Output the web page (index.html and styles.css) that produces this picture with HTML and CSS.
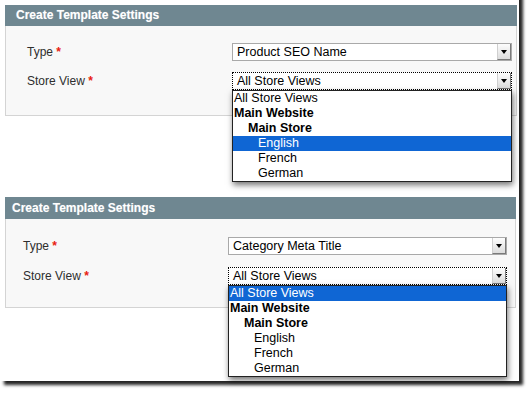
FILE: index.html
```html
<!DOCTYPE html>
<html lang="en">
<head>
  <meta charset="UTF-8">
  <title>Create Template Settings</title>
  <link rel="stylesheet" href="styles.css">
</head>
<body>
  <div class="shot">
    <section class="panel panel-a">
      <div class="panel-head">Create Template Settings</div>
      <div class="panel-body">
        <div class="row">
          <label>Type <em>*</em></label>
          <div class="select">Product SEO Name<span class="arrow"></span></div>
        </div>
        <div class="row">
          <label>Store View <em>*</em></label>
          <div class="select focus">All Store Views<span class="arrow"></span>
            <ul class="menu">
              <li>All Store Views</li>
              <li class="group">Main Website</li>
              <li class="group sub">Main Store</li>
              <li class="view selected">English</li>
              <li class="view">French</li>
              <li class="view">German</li>
            </ul>
          </div>
        </div>
      </div>
    </section>

    <section class="panel panel-b">
      <div class="panel-head">Create Template Settings</div>
      <div class="panel-body">
        <div class="row">
          <label>Type <em>*</em></label>
          <div class="select">Category Meta Title<span class="arrow"></span></div>
        </div>
        <div class="row">
          <label>Store View <em>*</em></label>
          <div class="select focus">All Store Views<span class="arrow"></span>
            <ul class="menu">
              <li class="selected">All Store Views</li>
              <li class="group">Main Website</li>
              <li class="group sub">Main Store</li>
              <li class="view">English</li>
              <li class="view">French</li>
              <li class="view">German</li>
            </ul>
          </div>
        </div>
      </div>
    </section>
  </div>
</body>
</html>
```

FILE: styles.css
```css
html {
  background: #fff;
}
body {
  margin: 0;
  min-height: 393px;
  font-family: "Liberation Sans", Arial, sans-serif;
  font-size: 12px;
}
.shot {
  width: 519px;
  height: 381px;
  margin-top: -8px;
  padding-top: 8px;
  background: #fff;
  box-shadow: 4px 4px 3px rgba(0, 0, 0, 0.85);
}
.panel {
  margin-left: 5px;
}
.panel-a {
  width: 512px;
  padding-top: 5px;
}
.panel-b {
  width: 511px;
  margin-top: 81px;
}
.panel-head {
  height: 21px;
  line-height: 21px;
  padding-left: 11px;
  background: #6f8791;
  color: #fff;
  font-weight: bold;
  text-shadow: 0 0 1px rgba(255, 255, 255, 0.4);
}
.panel-b .panel-head {
  height: 22px;
  line-height: 22px;
  padding-left: 7px;
}
.panel-body {
  border: 1px solid #d4d4d4;
  border-top: none;
  background: #f8f8f8;
  height: 90px;
  box-sizing: border-box;
  padding: 17px 0 0 21px;
}
.panel-b .panel-body {
  height: 89px;
  padding: 18px 0 0 17px;
}
.row {
  display: flex;
  align-items: center;
  height: 18px;
  margin-bottom: 11px;
}
.panel-b .row {
  margin-bottom: 12px;
}
label {
  width: 205px;
  color: #2e2e2e;
}
label em {
  font-style: normal;
  font-weight: bold;
  color: #e8200f;
}
.select {
  position: relative;
  width: 280px;
  height: 18px;
  line-height: 17px;
  box-sizing: border-box;
  border: 1px solid #a9a9a9;
  background: #fff;
  padding-left: 4px;
  color: #000;
  font-size: 12.5px;
}
.panel-b .select {
  width: 279px;
}
.select.focus {
  border: 1px dotted #000;
}
.arrow {
  position: absolute;
  top: 0;
  right: 0;
  width: 14px;
  height: 16px;
  box-sizing: border-box;
  border-left: 1px solid #cfcfcf;
  border-right: 1px solid #7a7a7a;
  border-bottom: 1px solid #7a7a7a;
  background: linear-gradient(#fdfdfd, #dcdcdc);
}
.arrow::after {
  content: "";
  position: absolute;
  left: 3px;
  top: 6px;
  border-left: 3px solid transparent;
  border-right: 3px solid transparent;
  border-top: 4px solid #000;
}
.menu {
  position: absolute;
  top: 100%;
  left: -1px;
  right: -1px;
  margin: 1px 0 0;
  padding: 0;
  list-style: none;
  background: #fff;
  border: 1px solid #222;
  box-shadow: 1px 3px 6px rgba(0, 0, 0, 0.55);
  z-index: 2;
}
.menu li {
  height: 15px;
  line-height: 15px;
  padding-left: 1px;
  color: #000;
}
.menu .group {
  font-weight: bold;
}
.menu .sub {
  padding-left: 15px;
}
.menu .view {
  padding-left: 25px;
}
.menu .selected {
  background: #0f66d4;
  color: #fff;
}
```
